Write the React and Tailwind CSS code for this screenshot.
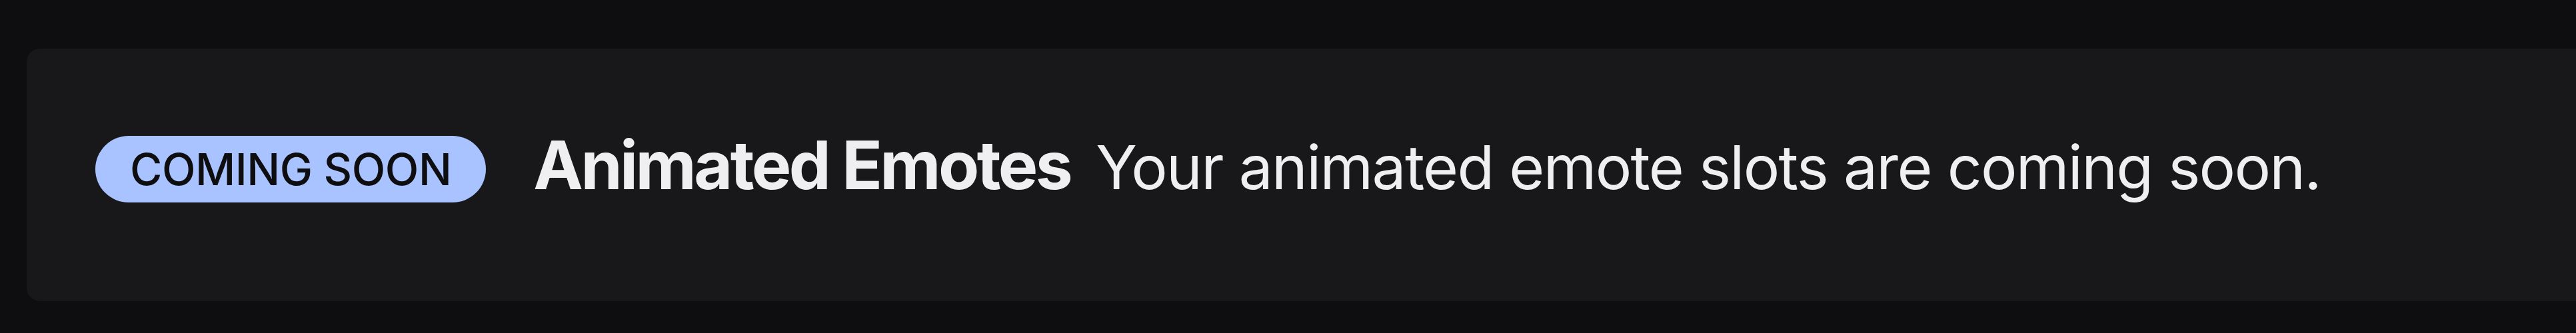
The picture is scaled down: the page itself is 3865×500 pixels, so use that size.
import React from "react";

const ComingSoonBadge = () => (
  <div className="flex h-[100px] shrink-0 items-center rounded-full bg-[#a8c3ff] px-[52px]">
    <span className="text-[66px] font-medium leading-none tracking-[-0.5px] text-[#0e0e10]">
      COMING SOON
    </span>
  </div>
);

export default function App() {
  return (
    <div
      className="h-[500px] w-full overflow-hidden bg-[#0e0e10] pt-[73px]"
      style={{ fontFamily: "Inter, 'Noto Sans', sans-serif" }}
    >
      <div className="ml-[40px] flex h-[379px] w-[3900px] items-center rounded-[20px] bg-[#18181b] pb-[18px] pl-[103px]">
        <ComingSoonBadge />

        <div className="ml-[71px] flex items-baseline gap-[38px] pb-[12px] text-[#efeff1]">
          <span className="whitespace-nowrap text-[100px] font-bold leading-none tracking-[-3.6px]">
            Animated Emotes
          </span>
          <span className="whitespace-nowrap text-[91px] font-normal leading-none tracking-[-1.7px]">
            Your animated emote slots are coming soon.
          </span>
        </div>
      </div>
    </div>
  );
}
